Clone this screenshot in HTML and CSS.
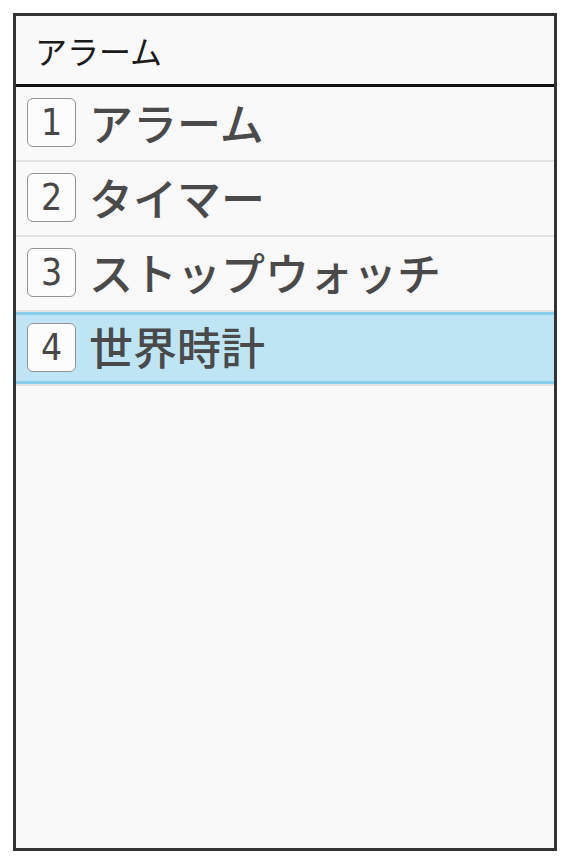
FILE: index.html
```html
<!DOCTYPE html>
<html lang="ja">
<head>
  <meta charset="UTF-8">
  <meta name="viewport" content="width=device-width, initial-scale=1.0">
  <title>アラーム</title>
  <link rel="stylesheet" href="styles.css">
</head>
<body>
  <div class="screen">
    <div class="title-bar">アラーム</div>

    <ul class="menu">
      <li class="item">
        <span class="key">1</span>
        <span class="label">アラーム</span>
      </li>
      <li class="item">
        <span class="key">2</span>
        <span class="label">タイマー</span>
      </li>
      <li class="item">
        <span class="key">3</span>
        <span class="label">ストップウォッチ</span>
      </li>
      <li class="item selected">
        <span class="key">4</span>
        <span class="label">世界時計</span>
      </li>
    </ul>
  </div>
</body>
</html>
```

FILE: styles.css
```css
:root {
  --frame-color: #333;
  --screen-color: #f9f9f9;
  --text-color: #4a4a4a;
  --divider-color: #e2e2e2;
  --select-color: #bee5f4;
  --select-edge: #86cfec;
}

body {
  margin: 0;
  padding: 13px;
  background: #fff;
  font-family: "Noto Sans CJK JP", "Noto Sans", sans-serif;
}

.screen {
  width: 538px;
  height: 832px;
  border: 3px solid var(--frame-color);
  background: var(--screen-color);
}

.title-bar {
  height: 68px;
  padding-left: 19px;
  border-bottom: 3px solid #111;
  display: flex;
  align-items: center;
  font-size: 32px;
  color: #1a1a1a;
}

.menu {
  list-style: none;
  margin: 0;
  padding: 0;
}

.item {
  height: 73px;
  border-bottom: 2px solid var(--divider-color);
  display: flex;
  align-items: center;
  gap: 13px;
  padding-left: 11px;
}

.item.selected {
  height: 72px;
  background: var(--select-color);
  box-shadow: inset 0 3px var(--select-edge), inset 0 -3px var(--select-edge);
}

.key {
  width: 47px;
  height: 47px;
  border: 1.5px solid #939393;
  border-radius: 6px;
  background: #fcfcfc;
  display: flex;
  align-items: center;
  justify-content: center;
  font-family: "DejaVu Sans", sans-serif;
  font-stretch: condensed;
  font-size: 37px;
  color: #474747;
  margin-top: -2px;
}

.label {
  font-size: 44px;
  font-weight: 500;
  color: var(--text-color);
  margin-top: -4px;
}
```
